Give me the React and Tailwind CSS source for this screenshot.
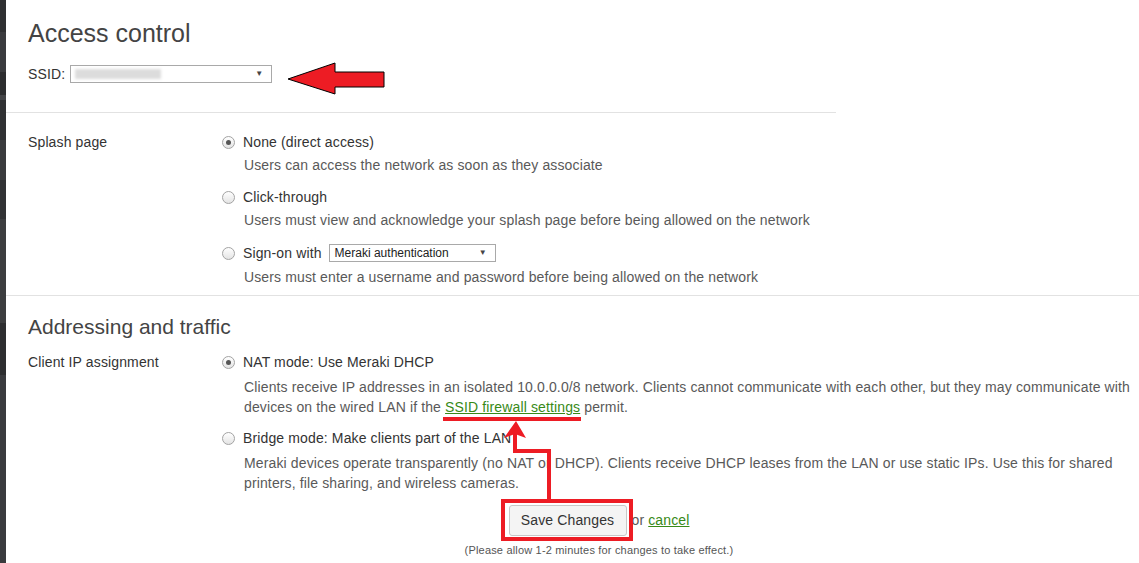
const stripe = [
  { h: 32, c: "bg-[#2f3032]" },
  { h: 40, c: "bg-[#3a3b3e]" },
  { h: 23, c: "bg-[#2c2d2f]" },
  { h: 5, c: "bg-[#434447]" },
  { h: 40, c: "bg-[#303133]" },
  { h: 40, c: "bg-[#3a3b3d]" },
  { h: 39, c: "bg-[#313234]" },
  { h: 104, c: "bg-[#3c3d3f]" },
  { h: 52, c: "bg-[#2d2e30]" },
  { h: 188, c: "bg-[#3a3b3e]" },
];

function Radio({ checked }) {
  return (
    <span className="flex h-[13px] w-[13px] shrink-0 items-center justify-center rounded-full border border-[#a3a3a3] bg-gradient-to-b from-[#ffffff] to-[#e4e4e4]">
      {checked && <span className="h-[5px] w-[5px] rounded-full bg-[#555]" />}
    </span>
  );
}

function Option({ checked, title, children, tall }) {
  return (
    <div>
      <div className={`flex items-center gap-[8px] ${tall ? "h-[22px]" : "h-[20px]"}`}>
        <Radio checked={checked} />
        {title}
      </div>
      <div className="mt-[3px] pl-[22px] leading-[20px] text-[#595959]">{children}</div>
    </div>
  );
}

function Annotations() {
  return (
    <svg
      className="pointer-events-none absolute left-0 top-0"
      width="1139"
      height="563"
      viewBox="0 0 1139 563"
    >
      <polygon
        points="288,79 335,63 335,72 384,72 384,87 335,87 335,94"
        fill="#ed1c24"
        stroke="#000"
        strokeWidth="1"
      />
      <rect x="443" y="417" width="138" height="4" fill="#ed1c24" />
      <rect x="547" y="450" width="4" height="50" fill="#ed1c24" />
      <rect x="513" y="449" width="38" height="4" fill="#ed1c24" />
      <rect x="513" y="432" width="4" height="20" fill="#ed1c24" />
      <polygon points="516,421 526,438 515,434 504,438" fill="#ed1c24" />
      <rect x="503" y="501" width="128" height="38" fill="none" stroke="#ed1c24" strokeWidth="4" />
    </svg>
  );
}

export default function App() {
  return (
    <div className="relative flex h-[563px] w-[1139px] overflow-hidden bg-white font-['Liberation_Sans',Arial,sans-serif] text-[14px] tracking-[0.13px] text-[#333]">
      <div className="flex w-[6px] shrink-0 flex-col">
        {stripe.map((s, i) => (
          <div key={i} className={s.c} style={{ height: s.h }} />
        ))}
      </div>

      <main className="flex flex-1 flex-col">
        <section className="h-[113px] w-[830px] border-b border-[#e2e2e2] pl-[22px] pt-[18px]">
          <h1 className="text-[25px] leading-[30px] tracking-normal text-[#444]">Access control</h1>
          <div className="mt-[17px] flex h-[18px] items-center gap-[5px]">
            <span>SSID:</span>
            <div className="flex h-[18px] w-[202px] items-center justify-between border border-[#a9a9a9] pl-[4px] pr-[8px]">
              <span className="h-[10px] w-[86px] bg-[#dcdcdc] blur-[1.5px]" />
              <span className="text-[8px] text-[#444]">▼</span>
            </div>
          </div>
        </section>

        <section className="grid grid-cols-[194px_1fr] border-b border-[#e2e2e2] pb-[8px] pl-[22px] pt-[19px]">
          <div className="flex h-[20px] items-center">Splash page</div>
          <div className="flex flex-col gap-[12px]">
            <Option checked title="None (direct access)">
              Users can access the network as soon as they associate
            </Option>
            <Option title="Click-through">
              Users must view and acknowledge your splash page before being allowed on the network
            </Option>
            <Option
              tall
              title={
                <span className="flex items-center gap-[7px]">
                  Sign-on with
                  <span className="flex h-[18px] w-[167px] items-center justify-between border border-[#a9a9a9] pl-[5px] pr-[8px] text-[12px] tracking-normal text-[#222]">
                    Meraki authentication
                    <span className="text-[8px] text-[#444]">▼</span>
                  </span>
                </span>
              }
            >
              Users must enter a username and password before being allowed on the network
            </Option>
          </div>
        </section>

        <section className="pt-[17px]">
          <h2 className="pl-[22px] text-[21px] leading-[28px] tracking-normal text-[#444]">
            Addressing and traffic
          </h2>
          <div className="mt-[11px] grid grid-cols-[194px_1fr] pl-[22px]">
            <div className="flex h-[20px] items-center">Client IP assignment</div>
            <div className="flex flex-col gap-[11px]">
              <div>
                <div className="flex h-[20px] items-center gap-[8px]">
                  <Radio checked />
                  NAT mode: Use Meraki DHCP
                </div>
                <p className="mt-[5px] pl-[22px] leading-[20px] text-[#595959]">
                  Clients receive IP addresses in an isolated 10.0.0.0/8 network. Clients cannot
                  communicate with each other, but they may communicate with devices on the wired
                  LAN if the{" "}
                  <a className="text-[#378a17] underline">SSID firewall settings</a> permit.
                </p>
              </div>
              <div>
                <div className="flex h-[20px] items-center gap-[8px]">
                  <Radio />
                  Bridge mode: Make clients part of the LAN
                </div>
                <p className="mt-[5px] pl-[22px] leading-[20px] text-[#595959]">
                  Meraki devices operate transparently (no NAT or DHCP). Clients receive DHCP
                  leases from the LAN or use static IPs. Use this for shared printers, file
                  sharing, and wireless cameras.
                </p>
              </div>
            </div>
          </div>

          <div className="ml-[458px] mt-[12px] flex w-[270px] flex-col items-center">
            <div className="flex items-center">
              <button
                type="button"
                className="h-[31px] w-[118px] rounded-[3px] border border-[#c8c8c8] bg-[#f4f4f4] text-[14px] text-[#333]"
              >
                Save Changes
              </button>
              <span className="ml-[5px] text-[#595959]">
                or <a className="text-[#378a17] underline">cancel</a>
              </span>
            </div>
            <p className="mt-[7px] whitespace-nowrap text-[11px] leading-[14px] tracking-[0.18px] text-[#555]">
              (Please allow 1-2 minutes for changes to take effect.)
            </p>
          </div>
        </section>
      </main>

      <Annotations />
    </div>
  );
}
